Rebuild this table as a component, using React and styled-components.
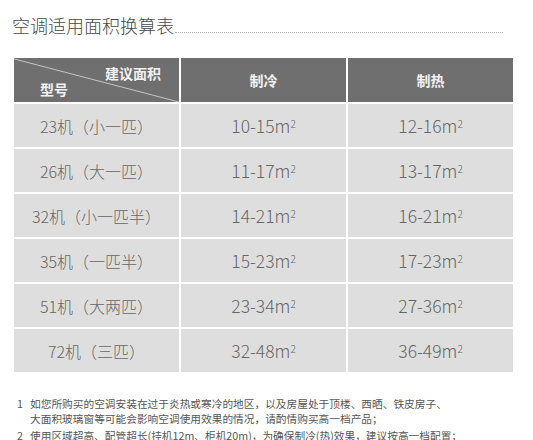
import React from 'react'
import styled, { createGlobalStyle } from 'styled-components'

const GlobalStyle = createGlobalStyle`
    body {
        margin: 0;
        background: #fff;
        font-family: "Noto Sans CJK SC", "Noto Sans", sans-serif;
    }
`

const Page = styled.div`
    width: 533px;
    height: 440px;
    overflow: hidden;
    padding: 11px 20px 0 12px;
    box-sizing: border-box;
`

const TitleRow = styled.div`
    display: flex;
    align-items: flex-end;
    height: 25px;
`

const Title = styled.h1`
    margin: 0;
    font-size: 18px;
    font-weight: 300;
    color: #4a4a4a;
    line-height: 22px;
    white-space: nowrap;
`

const Rule = styled.div`
    flex: 1;
    border-bottom: 1px dotted #b5b5b5;
    margin: 0 10px 3px 1px;
`

const Table = styled.div`
    margin: 22px 0 0 2px;
    display: grid;
    grid-template-columns: repeat(3, 1fr);
    grid-auto-rows: 43px;
    grid-template-rows: 44px;
    gap: 2px 2px;
`

const HeadCell = styled.div`
    background: #6f6f6f;
    color: #f2f2f2;
    font-weight: 700;
    font-size: 14px;
    display: flex;
    align-items: center;
    justify-content: center;
    position: relative;
`

const Corner = styled(HeadCell)`
    display: block;
`

const Diagonal = styled.svg`
    position: absolute;
    inset: 0;
    width: 100%;
    height: 100%;
`

const CornerTop = styled.span`
    position: absolute;
    right: 18px;
    top: 5px;
`

const CornerBottom = styled.span`
    position: absolute;
    left: 26px;
    bottom: 3px;
`

const Cell = styled.div`
    background: #dedede;
    color: #666;
    font-size: ${p => (p.$value ? '17.5px' : '16px')};
    font-weight: 300;
    display: flex;
    align-items: center;
    justify-content: center;
    white-space: nowrap;
`

const Sup = styled.sup`
    font-size: 10px;
    position: relative;
    top: -2px;
`

const Notes = styled.div`
    margin: 24px 0 0 5px;
    font-size: 10.7px;
    color: #555;
    line-height: 15px;
`

const Note = styled.div`
    display: flex;
    margin-bottom: 2px;
`

const Num = styled.span`
    width: 13px;
    flex: none;
`

const rows = [
    ['23机（小一匹）', '10-15', '12-16'],
    ['26机（大一匹）', '11-17', '13-17'],
    ['32机（小一匹半）', '14-21', '16-21'],
    ['35机（一匹半）', '15-23', '17-23'],
    ['51机（大两匹）', '23-34', '27-36'],
    ['72机（三匹）', '32-48', '36-49'],
]

const Area = ({ v }) => (
    <Cell $value>{v}m<Sup>2</Sup></Cell>
)

export default function App() {
    return (
        <Page>
            <GlobalStyle />
            <TitleRow>
                <Title>空调适用面积换算表</Title>
                <Rule />
            </TitleRow>
            <Table>
                <Corner>
                    <Diagonal viewBox="0 0 100 100" preserveAspectRatio="none">
                        <line x1="0" y1="2" x2="100" y2="100" stroke="#c4c4c4" strokeWidth="1" vectorEffect="non-scaling-stroke" />
                    </Diagonal>
                    <CornerTop>建议面积</CornerTop>
                    <CornerBottom>型号</CornerBottom>
                </Corner>
                <HeadCell>制冷</HeadCell>
                <HeadCell>制热</HeadCell>
                {rows.map(([name, cool, heat]) => (
                    <React.Fragment key={name}>
                        <Cell>{name}</Cell>
                        <Area v={cool} />
                        <Area v={heat} />
                    </React.Fragment>
                ))}
            </Table>
            <Notes>
                <Note>
                    <Num>1</Num>
                    <span>如您所购买的空调安装在过于炎热或寒冷的地区，以及房屋处于顶楼、西晒、铁皮房子、<br />大面积玻璃窗等可能会影响空调使用效果的情况，请酌情购买高一档产品；</span>
                </Note>
                <Note>
                    <Num>2</Num>
                    <span>使用区域超高、配管超长(挂机12m、柜机20m)，为确保制冷(热)效果，建议按高一档配置；</span>
                </Note>
            </Notes>
        </Page>
    )
}
